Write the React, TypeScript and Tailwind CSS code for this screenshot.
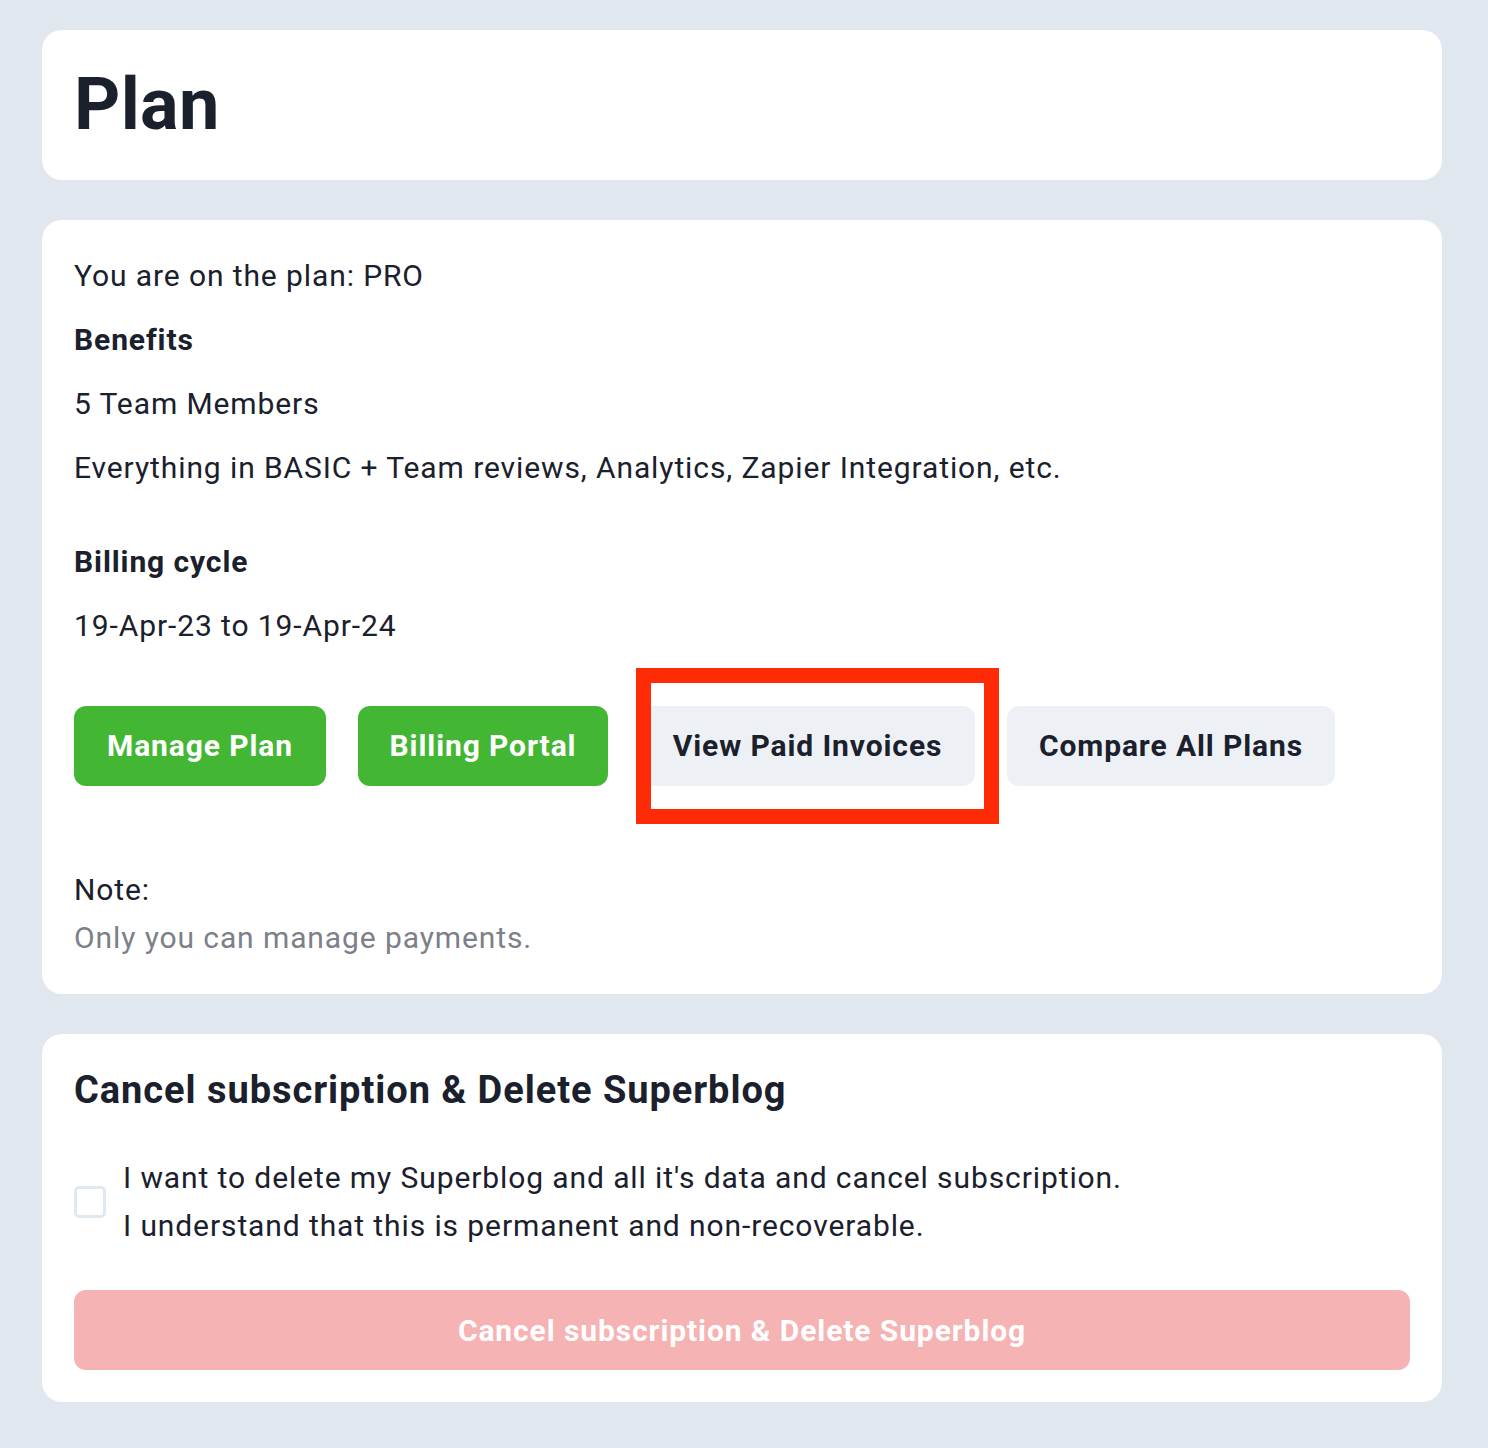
import { useState } from "react";

const PlanPage = () => {
  const [confirmed, setConfirmed] = useState(false);

  return (
    <div className="min-h-[1448px] bg-[#e1e7ef] pt-[30px] pr-[46px] pb-[46px] pl-[42px] font-['Roboto',sans-serif] text-[#1a202c]">
      <div className="flex flex-col gap-10">
        {/* Title card */}
        <div className="flex h-[150px] items-center rounded-[20px] bg-white px-8">
          <h1 className="text-[72px] font-bold leading-none tracking-[0.3px]">Plan</h1>
        </div>

        {/* Plan details */}
        <div className="rounded-[20px] bg-white px-8 py-8 text-[30px] leading-[48px] tracking-[0.9px]">
          <p>You are on the plan: PRO</p>
          <p className="mt-4 font-bold">Benefits</p>
          <p className="mt-4">5 Team Members</p>
          <p className="mt-4">Everything in BASIC + Team reviews, Analytics, Zapier Integration, etc.</p>

          <p className="mt-[46px] font-bold">Billing cycle</p>
          <p className="mt-4">19-Apr-23 to 19-Apr-24</p>

          <div className="mt-14 flex gap-8">
            <button className="h-20 w-[252px] rounded-xl bg-[#43b734] text-[30px] font-bold text-white">
              Manage Plan
            </button>
            <button className="h-20 w-[250px] rounded-xl bg-[#43b734] text-[30px] font-bold text-white">
              Billing Portal
            </button>
            <div className="relative">
              <button className="h-20 w-[335px] rounded-xl bg-[#edf0f5] text-[30px] font-bold">
                View Paid Invoices
              </button>
              {/* highlight annotation */}
              <div className="pointer-events-none absolute top-[-38px] left-[-4px] h-[156px] w-[363px] border-[15px] border-[#ff2a06]" />
            </div>
            <button className="h-20 w-[328px] rounded-xl bg-[#edf0f5] text-[30px] font-bold">
              Compare All Plans
            </button>
          </div>

          <p className="mt-20">Note:</p>
          <p className="text-[#7c8089]">Only you can manage payments.</p>
        </div>

        {/* Danger zone */}
        <div className="rounded-[20px] bg-white px-8 py-8">
          <h2 className="text-[38px] font-bold leading-[48px] tracking-[0.95px]">
            Cancel subscription &amp; Delete Superblog
          </h2>

          <label className="mt-10 flex items-center gap-[17px] text-[30px] leading-[48px] tracking-[0.9px]">
            <input
              type="checkbox"
              checked={confirmed}
              onChange={(e) => setConfirmed(e.target.checked)}
              className="h-8 w-8 shrink-0 appearance-none rounded-[5px] border-[3px] border-[#e2e8f0] bg-white"
            />
            <span>
              I want to delete my Superblog and all it's data and cancel subscription.
              <br />
              I understand that this is permanent and non-recoverable.
            </span>
          </label>

          <button
            disabled={!confirmed}
            className="mt-10 h-20 w-full rounded-xl bg-[#f5b3b3] text-[30px] font-bold tracking-[0.9px] text-white"
          >
            Cancel subscription &amp; Delete Superblog
          </button>
        </div>
      </div>
    </div>
  );
};

export default function App() {
  return <PlanPage />;
}
